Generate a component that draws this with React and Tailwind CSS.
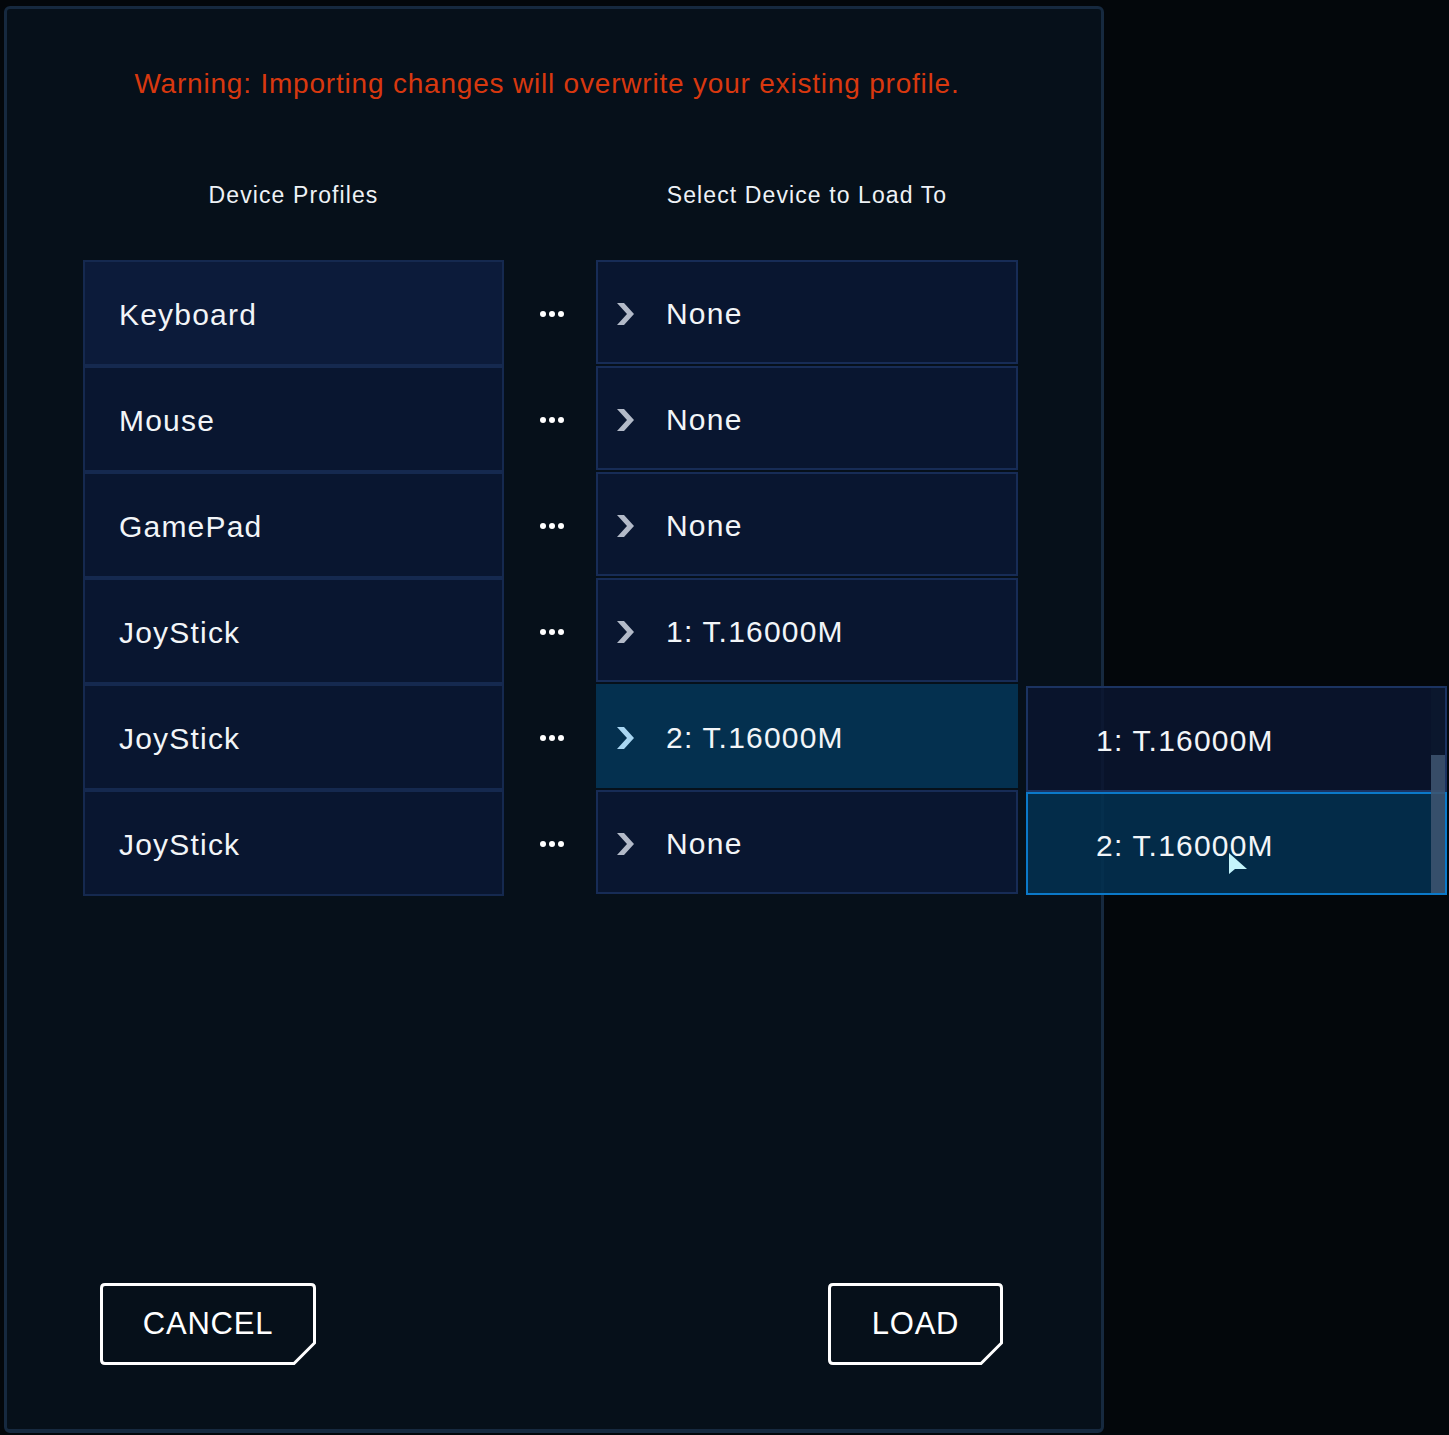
import React from 'react';

const FONT = { fontFamily: '"Liberation Sans", Arial, sans-serif' };

const profiles = ['Keyboard', 'Mouse', 'GamePad', 'JoyStick', 'JoyStick', 'JoyStick'];
const targets = ['None', 'None', 'None', '1: T.16000M', '2: T.16000M', 'None'];

const Chevron = ({ active }) => (
  <svg width="18" height="24" viewBox="0 0 18 24" className="shrink-0">
    <polygon points="1,1 8,1 18,12 8,23 1,23 11,12" fill={active ? '#a9d6f2' : '#b3bac8'} />
  </svg>
);

const Dots = () => (
  <div className="flex items-center justify-center gap-[3px] pl-[4px]">
    <span className="w-[6px] h-[6px] rounded-full bg-white" />
    <span className="w-[6px] h-[6px] rounded-full bg-white" />
    <span className="w-[6px] h-[6px] rounded-full bg-white" />
  </div>
);

// outlined button with the bottom right corner clipped off
const CutButton = ({ label, width }) => (
  <button className="relative h-[82px] flex items-center justify-center text-white text-[31px] tracking-[0.8px]" style={{ width }}>
    <svg className="absolute inset-0" width={width} height="82" viewBox={`0 0 ${width} 82`}>
      <path
        d={`M5 1.5 H${width - 5} Q${width - 1.5} 1.5 ${width - 1.5} 5 V60 L${width - 22} 80.5 H5 Q1.5 80.5 1.5 77 V5 Q1.5 1.5 5 1.5 Z`}
        fill="none"
        stroke="white"
        strokeWidth="3"
      />
    </svg>
    <span className="relative">{label}</span>
  </button>
);

export default function App() {
  return (
    <div className="relative w-[1449px] h-[1435px] bg-[#03070b] overflow-hidden" style={FONT}>
      <div className="ml-[4px] pt-[6px]">
        <div className="w-[1100px] h-[1427px] border-[3px] border-b-4 border-[#16293f] rounded-md bg-[#06101a] flex flex-col">
          <div className="mt-[51px] h-[48px] flex items-center justify-center pr-[14px] text-[#d8380f] text-[28px] tracking-[0.8px]">
            Warning: Importing changes will overwrite your existing profile.
          </div>

          <div className="mt-[67px] h-[40px] pl-[76px] grid grid-cols-[421px_92px_422px] items-center text-[#eef2f6] text-[23px] tracking-[1.1px]">
            <div className="text-center">Device Profiles</div>
            <div />
            <div className="text-center">Select Device to Load To</div>
          </div>

          <div className="mt-[45px] pl-[76px] grid grid-cols-[421px_92px_422px]">
            <div className="flex flex-col">
              {profiles.map((p, i) => (
                <div
                  key={i}
                  className={`h-[106px] border-2 border-[#15294f] flex items-center pl-[34px] pt-[2px] text-[#f2f5f8] text-[30px] tracking-[1.2px] ${i === 0 ? 'bg-[#0c1b3a]' : 'bg-[#091630]'}`}
                >
                  {p}
                </div>
              ))}
            </div>
            <div className="flex flex-col">
              {profiles.map((_, i) => (
                <div key={i} className="h-[106px] flex items-center justify-center pt-[2px]">
                  <Dots />
                </div>
              ))}
            </div>
            <div className="flex flex-col">
              {targets.map((t, i) => {
                const active = i === 4;
                return (
                  <div
                    key={i}
                    className={`h-[104px] mb-[2px] border-2 flex items-center pl-[18px] pt-[3px] gap-[32px] text-[#f2f5f8] text-[30px] tracking-[1.2px] ${active ? 'bg-[#04304f] border-[#04304f]' : 'bg-[#091630] border-[#172c56]'}`}
                  >
                    <Chevron active={active} />
                    <span>{t}</span>
                  </div>
                );
              })}
            </div>
          </div>

          <div className="mt-auto pb-[64px] pl-[93px] pr-[98px] flex justify-between">
            <CutButton label="CANCEL" width={216} />
            <CutButton label="LOAD" width={175} />
          </div>
        </div>
      </div>

      {/* dropdown for the selected target row */}
      <div className="absolute left-[1026px] top-[686px] w-[421px] h-[209px] flex flex-col">
        <div className="h-[106px] border-2 border-[#1b3361] bg-[#0a1530]/85 flex items-center pl-[68px] pr-[16px] pt-[3px] text-[#f2f5f8] text-[30px] tracking-[1.2px]">
          1: T.16000M
        </div>
        <div className="h-[103px] border-2 border-[#0b79c9] bg-[#03304f]/90 flex items-center pl-[68px] pr-[16px] pt-[3px] text-[#f2f5f8] text-[30px] tracking-[1.2px]">
          2: T.16000M
        </div>
        <div className="absolute right-[2px] top-[2px] bottom-[2px] w-[14px] bg-[#0d1a30]/60">
          <div className="mt-[67px] h-[138px] bg-[#4a6480]/70" />
        </div>
      </div>

      {/* mouse pointer */}
      <svg className="absolute left-[1228px] top-[852px]" width="22" height="26" viewBox="0 0 22 26">
        <polygon points="1,1 1,22 7,17 19,17" fill="#c4f4fb" />
      </svg>
    </div>
  );
}
